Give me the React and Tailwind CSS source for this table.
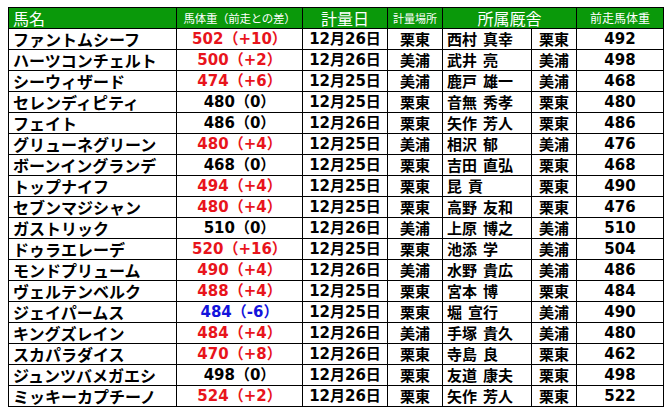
import React from "react";

const rows = [
  ["ファントムシーフ", "502（+10）", "r", "12月26日", "栗東", "西村 真幸", "栗東", "492"],
  ["ハーツコンチェルト", "500（+2）", "r", "12月26日", "美浦", "武井 亮", "美浦", "498"],
  ["シーウィザード", "474（+6）", "r", "12月25日", "美浦", "鹿戸 雄一", "美浦", "468"],
  ["セレンディピティ", "480（0）", "k", "12月25日", "栗東", "音無 秀孝", "栗東", "480"],
  ["フェイト", "486（0）", "k", "12月26日", "栗東", "矢作 芳人", "栗東", "486"],
  ["グリューネグリーン", "480（+4）", "r", "12月25日", "美浦", "相沢 郁", "美浦", "476"],
  ["ボーンイングランデ", "468（0）", "k", "12月25日", "栗東", "吉田 直弘", "栗東", "468"],
  ["トップナイフ", "494（+4）", "r", "12月25日", "栗東", "昆 貢", "栗東", "490"],
  ["セブンマジシャン", "480（+4）", "r", "12月25日", "栗東", "高野 友和", "栗東", "476"],
  ["ガストリック", "510（0）", "k", "12月26日", "美浦", "上原 博之", "美浦", "510"],
  ["ドゥラエレーデ", "520（+16）", "r", "12月25日", "栗東", "池添 学", "美浦", "504"],
  ["モンドプリューム", "490（+4）", "r", "12月26日", "美浦", "水野 貴広", "美浦", "486"],
  ["ヴェルテンベルク", "488（+4）", "r", "12月25日", "栗東", "宮本 博", "栗東", "484"],
  ["ジェイパームス", "484（-6）", "b", "12月25日", "栗東", "堀 宣行", "美浦", "490"],
  ["キングズレイン", "484（+4）", "r", "12月26日", "美浦", "手塚 貴久", "美浦", "480"],
  ["スカパラダイス", "470（+8）", "r", "12月26日", "栗東", "寺島 良", "栗東", "462"],
  ["ジュンツバメガエシ", "498（0）", "k", "12月26日", "栗東", "友道 康夫", "栗東", "498"],
  ["ミッキーカプチーノ", "524（+2）", "r", "12月26日", "栗東", "矢作 芳人", "栗東", "522"],
];

const color = { r: "text-[#e8141c]", b: "text-[#1414dc]", k: "text-black" };

// trainer name: family / given with a visible gap
function Trainer({ name }) {
  const [a, b] = name.split(" ");
  return (
    <>
      {a}
      <span className="inline-block w-[6px]" />
      {b}
    </>
  );
}

export default function App() {
  return (
    <div className="w-[668px] h-[414px] bg-white pt-[7px] pl-[8px] font-['DejaVu_Sans','Noto_Sans_CJK_JP',sans-serif]">
      <table className="table-fixed border-collapse w-[655px] leading-[18px]">
        <colgroup>
          <col className="w-[168px]" />
          <col className="w-[126px]" />
          <col className="w-[85px]" />
          <col className="w-[55px]" />
          <col className="w-[89px]" />
          <col className="w-[45px]" />
          <col className="w-[87px]" />
        </colgroup>
        <thead>
          {/* header row */}
          <tr className="bg-[#0a990a] text-white font-['Noto_Sans_CJK_JP',sans-serif]">
            <th className="border border-black h-[21px] p-0 pl-1 text-left font-normal text-[16px]">馬名</th>
            <th className="border border-black p-0 font-normal text-[11.5px] tracking-tight">馬体重（前走との差）</th>
            <th className="border border-black p-0 font-normal text-[16px]">計量日</th>
            <th className="border border-black p-0 font-normal text-[11px]">計量場所</th>
            <th colSpan={2} className="border border-black p-0 font-normal text-[16px]">所属厩舎</th>
            <th className="border border-black p-0 font-normal text-[12px]">前走馬体重</th>
          </tr>
        </thead>
        <tbody className="font-bold">
          {rows.map((r, i) => (
            <tr key={i}>
              <td className="border border-black h-[21px] p-0 pl-[4px] text-[16px] whitespace-nowrap font-['Noto_Sans_CJK_JP',sans-serif]">{r[0]}</td>
              <td className={"border border-black p-0 text-center text-[15px] " + color[r[2]]}>{r[1]}</td>
              <td className="border border-black p-0 text-center text-[15px]">{r[3]}</td>
              <td className="border border-black p-0 text-center text-[15px] font-['Noto_Sans_CJK_JP',sans-serif]">{r[4]}</td>
              <td className="border border-black p-0 pl-[4px] text-[15px] whitespace-nowrap font-['Noto_Sans_CJK_JP',sans-serif]">
                <Trainer name={r[5]} />
              </td>
              <td className="border border-black p-0 text-center text-[15px] font-['Noto_Sans_CJK_JP',sans-serif]">{r[6]}</td>
              <td className="border border-black p-0 text-center text-[15px]">{r[7]}</td>
            </tr>
          ))}
        </tbody>
      </table>
    </div>
  );
}
